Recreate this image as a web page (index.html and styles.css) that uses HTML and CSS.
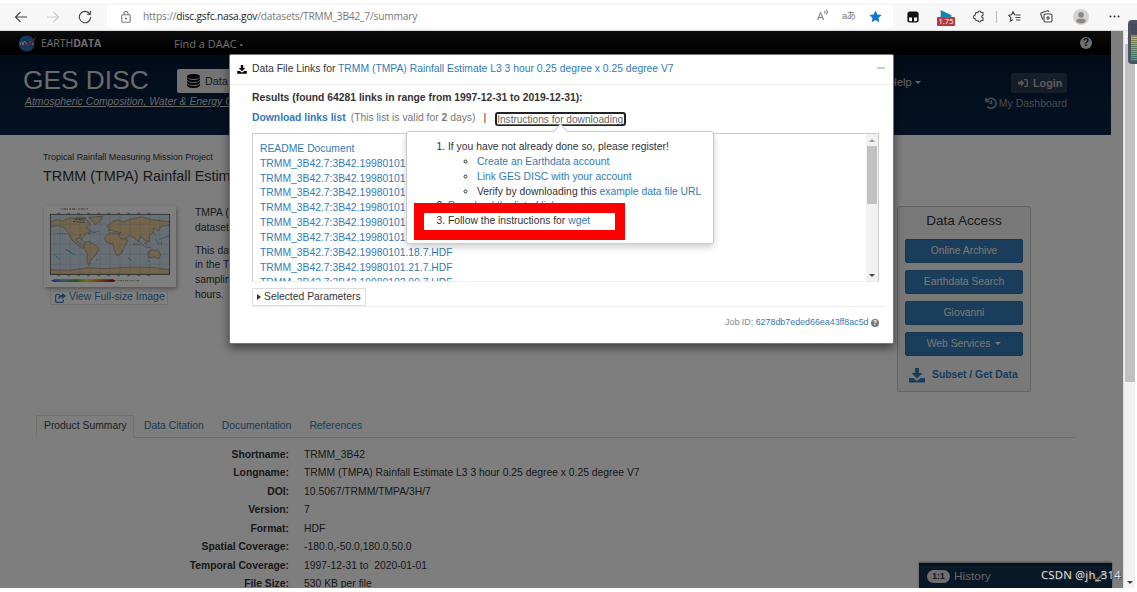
FILE: index.html
```html
<!DOCTYPE html>
<html lang="en">
<head>
  <meta charset="UTF-8"/>
  <meta name="viewport" content="width=device-width, initial-scale=1.0"/>
  <title>GES DISC Dataset: TRMM (TMPA) Rainfall Estimate</title>
  <link rel="stylesheet" href="styles.css">
</head>
<body>
  <!-- browser toolbar -->
  <div class="browser-bar">
    <div class="nav-icons">
      <svg width="14" height="14" viewBox="0 0 14 14"><path d="M13 7H1.5M6.5 2L1.5 7l5 5"/></svg>
      <svg class="disabled" width="14" height="14" viewBox="0 0 14 14"><path d="M1 7h11.5M7.5 2l5 5-5 5"/></svg>
      <svg width="14" height="14" viewBox="0 0 14 14"><path d="M11.8 4A5.7 5.7 0 1 0 12.7 7M12.4.8v3.5H8.9"/></svg>
    </div>
    <div class="address">
      <svg class="lock" width="10" height="12" viewBox="0 0 10 12"><rect x=".8" y="3.8" width="8.4" height="7.4" rx="1"/><path d="M3 3.8V2.5a2 2 0 0 1 4 0v1.3"/><circle cx="5" cy="7.5" r=".5"/></svg>
      <span class="url">https://<b>disc.gsfc.nasa.gov</b>/datasets/TRMM_3B42_7/summary</span>
      <span class="read">A<svg width="5" height="7" viewBox="0 0 5 7"><path d="M.6 2q1 1 0 2.500M2.400.7q2 2.300 0 4.800"/></svg></span>
      <span class="trans">aあ</span>
      <svg class="star" width="13" height="13" viewBox="0 0 14 14"><path d="M7 .6l2 4.200 4.600.6-3.400 3.100.9 4.700L7 10.900l-4.100 2.300.9-4.700L.4 5.400 5 4.800z"/></svg>
    </div>
    <div class="tools">
      <svg class="ext" width="12" height="12" viewBox="0 0 12 12"><rect x=".4" y=".6" width="11.200" height="10.800" rx="2.500" fill="#111"/><path d="M2 6.500h3v3.800H3.200A1.200 1.200 0 0 1 2 9zM7 6.500h3V9a1.200 1.200 0 0 1-1.200 1.300H7z" fill="#fff"/></svg>
      <span class="speed"><svg width="12" height="9" viewBox="0 0 12 9"><path d="M0 0l12 6v3H0z" fill="#1285b5"/></svg><i>1.75</i></span>
      <svg class="puzzle" width="12" height="13" viewBox="0 0 12 13"><path d="M3 2.500h2a1.500 1.500 0 0 1 3 0h2v2.700a1.300 1.300 0 0 0 0 2.600v2.700H8a1.500 1.500 0 0 1-3 0H3L1.800 8.500a1.500 1.500 0 0 1 0-3z"/></svg>
      <span class="sep"></span>
      <svg class="fav" width="13" height="12" viewBox="0 0 13 12"><path d="M7.800 4L6.500 3.800 5 .8 3.600 3.800.7 4.300l2.200 2.300-.5 3.500L5 8.700M8 4h4.500M7.500 6.500h5M8 9h4.500"/></svg>
      <svg class="coll" width="13" height="13" viewBox="0 0 13 13"><rect x="4" y="4" width="8" height="8" rx="1.500"/><path d="M8 6v4M6 8h4M2.800 9.500L.8 4.200q-.3-1 .7-1.500L7.500.8q1-.2 1.500.9"/></svg>
      <svg class="avatar" width="16" height="16" viewBox="0 0 16 16"><circle cx="8" cy="8" r="8" fill="#d5d3d1"/><circle cx="8" cy="5.800" r="2.900" fill="#8b8886"/><path d="M3.300 12.500q0-2.700 2.400-2.700h4.600q2.400 0 2.400 2.700Q11 14.500 8 14.500t-4.700-2z" fill="#8b8886"/></svg>
      <svg class="more" width="11" height="3" viewBox="0 0 11 3"><circle cx="1.500" cy="1.500" r="1"/><circle cx="5.500" cy="1.500" r="1"/><circle cx="9.500" cy="1.500" r="1"/></svg>
    </div>
  </div>

  <div class="viewport">
    <div class="page">
      <div class="nasa-bar">
        <svg class="nasa" width="20" height="17" viewBox="0 0 20 17"><circle cx="8.700" cy="8.500" r="8" fill="#2b6cb8"/><path d="M2 10q2-6 3 0 1-6 3-2t3 1q2-5 4 1" stroke="#eee" fill="none"/><path d="M1 12Q7 11 11 8T19 1Q14 10 10 10T1 12" fill="#e0334a"/></svg>
        <span class="earthdata">EARTH<b>DATA</b></span>
        <span class="daac">Find a DAAC <small>•</small></span>
        <span class="q">?</span>
      </div>
      <div class="site-header">
        <div class="brand">
          <div class="logo">GES DISC</div>
          <div class="tagline">Atmospheric Composition, Water &amp; Energy Cycles</div>
        </div>
        <div class="search-type">
          <svg width="13" height="14" viewBox="0 0 13 14"><path d="M0 2.500Q0 0 6.500 0T13 2.500 6.500 5 0 2.500M0 4q2 2 6.500 2T13 4v1.500Q12 8 6.500 8T0 5.500zM0 7q2 2 6.500 2T13 7v1.500Q12 11 6.500 11T0 8.500zM0 10q2 2 6.500 2T13 10v1.500Q12 14 6.500 14T0 11.500z"/></svg>
          Data
        </div>
        <div class="help">Help <i class="caret"></i></div>
        <div class="user">
          <div class="login"><svg width="10" height="8" viewBox="0 0 10 8"><path d="M0 2.600h3V.5L6.300 4 3 7.500V5.400H0zM6 0h2.500Q10 0 10 1.500v5Q10 8 8.500 8H6V6.700h1.900q.7 0 .7-.8V2.100Q8.600 1.300 7.900 1.300H6z"/></svg>Login</div>
          <div class="dashboard"><svg width="12" height="12" viewBox="0 0 12 12"><path d="M1 .8v3.700h3.700M1.500 4.200A5 5 0 1 1 2.300 9.500M6.500 3.200v3.300H4.500"/></svg>My Dashboard</div>
        </div>
      </div>

      <div class="dataset">
        <div class="project">Tropical Rainfall Measuring Mission Project</div>
        <h1>TRMM (TMPA) Rainfall Estimate L3</h1>
        <div class="overview">
          <div class="preview">
            <svg class="map" width="132" height="81" viewBox="18 20 396 243">
              <rect x="18" y="20" width="396" height="243" fill="#fff"/>
              <path d="M68 29h82" stroke="#999" stroke-width="4" stroke-dasharray="5 3 9 2 3 4"/>
              <rect x="37" y="45" width="358" height="180" fill="#cfdde9"/>
              <g fill="#e6c898" stroke="#71685c" stroke-width="1.500">
                <path d="M38 68l17-7 20 4 20-10 25 3 20-3 12 13 5 9-14 8 10 6 8 5-13 5-10 8-7 7 2 8-10-9-8 5 5 9 10 4 10 11-7 3-18-13-13-12-6-12-7-13-12-14-20-4-19 4z"/>
                <path d="M152 54l42-3-5 12-17 13-7-10z"/>
                <path d="M139 128l16-1 23 14 5 7-9 18-13 14-10 15-5-8 2-24-10-18z"/>
                <path d="M203 110l12-10 25 2 15 6 9 14h6l-6 12-8 14-9 17-11 4-7-18-4-16-20-7-5-9z"/>
                <path d="M210 96l5-11-9-3 13-12 20-9 16 7 25-9 30-7 30 9 55 6v11l-24 3-10 14-15-9v14l-14 10 4 12-10 9-8-12-10-8-7 18-11-13-15-7-8 6-17 5-10-15 10-5-20-4-15-4z"/>
                <path d="M330 158l13-8 9 5 6-5 10 15-5 13-12-5-19 3z"/>
                <path d="M38 211l55 2 57-8 50 3 80-5 60 1 54 7v14H38z"/>
                <path d="M308 130l12 12 20 4M318 132l10 4M349 100l3 10M255 153l-3 8" fill="none"/>
              </g>
              <path d="M110 60l30 3M105 66l35 4M115 55l28 3M150 200l8-7" stroke="#555" stroke-width="2.500" stroke-dasharray="6 2 3 2"/>
              <path d="M37 75h358M37 105h358M37 135h358M37 165h358M37 195h358M67 45v180M97 45v180M126 45v180M156 45v180M186 45v180M216 45v180M246 45v180M276 45v180M306 45v180M335 45v180M365 45v180" stroke="#8798ab" stroke-width="1" opacity=".6"/>
              <g fill="none" stroke-width="3" stroke-dasharray="4 3">
                <path d="M58 103h25M48 165l18 15M83 150l28 18M150 104l35-8M270 176l12 8M288 134l20 2M328 182l8 6M365 120l28-10" stroke="#46a680"/>
                <path d="M125 107h5M175 180l3 2M286 135h6M326 122l8 5M370 128v10M222 132l5-5" stroke="#d65b26"/>
                <path d="M86 152l18 10M168 96v8M353 120l8 14" stroke="#4c8fc9"/>
              </g>
              <rect x="37" y="45" width="358" height="180" fill="none" stroke="#555" stroke-width="2.500"/>
              <path d="M58 42h300M58 229h300" stroke="#777" stroke-width="2.500" stroke-dasharray="8 22"/>
              <defs><linearGradient id="scale"><stop stop-color="#335ccc"/><stop offset=".2" stop-color="#4fb3c6"/><stop offset=".4" stop-color="#53a238"/><stop offset=".55" stop-color="#eadb38"/><stop offset=".75" stop-color="#e66c22"/><stop offset="1" stop-color="#7c1010"/></linearGradient></defs>
              <path d="M38 244l12-4h174l10 4-10 4H50z" fill="url(#scale)"/>
              <path d="M238 244h68" stroke="#999" stroke-width="3" stroke-dasharray="3 3 9 2"/>
            </svg>
            <a class="full-size"><svg width="11" height="10" viewBox="0 0 11 10"><path d="M5 1.500H2Q.7 1.500.7 2.800V8q0 1.300 1.300 1.300h5Q8.300 9.300 8.300 8V6.500" fill="none" stroke="#337ab7" stroke-width="1.200"/><path d="M7 0l4 3-4 3V4.200Q4.500 4 3.600 6.800 2.500 2 7 1.800z" fill="#337ab7"/></svg>View Full-size Image</a>
          </div>
          <div class="description">
            <p>TMPA (3B42)<br>dataset</p>
            <p>This data<br>in the TRMM<br>sampling<br>hours.</p>
          </div>
          <div class="data-access">
            <h2>Data Access</h2>
            <a class="btn">Online Archive</a>
            <a class="btn">Earthdata Search</a>
            <a class="btn">Giovanni</a>
            <a class="btn">Web Services <i class="caret"></i></a>
            <a class="subset"><svg width="16" height="15" viewBox="0 0 16 15"><path d="M6 0h4v5h3.500L8 10.500 2.500 5H6zM0 10h4.500L8 13l3.500-3H16v4.500H0z"/></svg>Subset / Get Data</a>
          </div>
        </div>
        <div class="tabs">
          <a class="active">Product Summary</a>
          <a>Data Citation</a>
          <a>Documentation</a>
          <a>References</a>
        </div>
        <dl class="summary">
          <dt>Shortname:</dt><dd>TRMM_3B42</dd>
          <dt>Longname:</dt><dd>TRMM (TMPA) Rainfall Estimate L3 3 hour 0.25 degree x 0.25 degree V7</dd>
          <dt>DOI:</dt><dd>10.5067/TRMM/TMPA/3H/7</dd>
          <dt>Version:</dt><dd>7</dd>
          <dt>Format:</dt><dd>HDF</dd>
          <dt>Spatial Coverage:</dt><dd>-180.0,-50.0,180.0,50.0</dd>
          <dt>Temporal Coverage:</dt><dd>1997-12-31 to &nbsp;2020-01-01</dd>
          <dt>File Size:</dt><dd>530 KB per file</dd>
        </dl>
      </div>
      <div class="history">
        <span class="count">1:1</span>History
        <svg width="10" height="10" viewBox="0 0 10 10"><path d="M5.500 0H10v4.500L8.500 3 3 8.500 4.500 10H0V5.500L1.500 7 7 1.500z"/></svg>
      </div>
      <div class="backdrop"></div>
    </div>
    <div class="scrollbar"><i class="up"></i><i class="thumb"></i><i class="down"></i></div>
  </div>

  <div class="modal">
    <div class="modal-header">
      <svg width="10" height="9" viewBox="0 0 16 15"><path d="M6 0h4v5h3.500L8 10.500 2.500 5H6zM0 10h4.500L8 13l3.500-3H16v4.500H0z"/></svg>
      <span>Data File Links for <a>TRMM (TMPA) Rainfall Estimate L3 3 hour 0.25 degree x 0.25 degree V7</a></span>
      <i class="minimize"></i>
    </div>
    <div class="modal-body">
      <div class="results">Results (found 64281 links in range from 1997-12-31 to 2019-12-31):</div>
      <div class="download-line">
        <a class="download">Download links list</a>
        <span class="valid">(This list is valid for <b>2</b> days)</span>
        <span class="pipe">|</span>
        <span class="instructions">Instructions for downloading</span>
      </div>
      <div class="links-box">
        <div class="links">
          <a>README Document</a>
          <a>TRMM_3B42.7:3B42.19980101.00.7.HDF</a>
          <a>TRMM_3B42.7:3B42.19980101.03.7.HDF</a>
          <a>TRMM_3B42.7:3B42.19980101.06.7.HDF</a>
          <a>TRMM_3B42.7:3B42.19980101.09.7.HDF</a>
          <a>TRMM_3B42.7:3B42.19980101.12.7.HDF</a>
          <a>TRMM_3B42.7:3B42.19980101.15.7.HDF</a>
          <a>TRMM_3B42.7:3B42.19980101.18.7.HDF</a>
          <a>TRMM_3B42.7:3B42.19980101.21.7.HDF</a>
          <a>TRMM_3B42.7:3B42.19980102.00.7.HDF</a>
        </div>
        <div class="scrollbar small"><i class="up"></i><i class="thumb"></i><i class="down"></i></div>
      </div>
      <div class="params"><span><i></i>Selected Parameters</span></div>
      <div class="job">Job ID: <a>6278db7eded66ea43ff8ac5d</a> <span class="q">?</span></div>
    </div>
    <div class="popover">
      <ol>
        <li>If you have not already done so, please register!
          <ul>
            <li><a>Create an Earthdata account</a></li>
            <li><a>Link GES DISC with your account</a></li>
            <li>Verify by downloading this <a>example data file URL</a></li>
          </ul>
        </li>
        <li><a>Download the list of links</a></li>
        <li>Follow the instructions for <a>wget</a></li>
      </ol>
    </div>
    <div class="highlight"></div>
  </div>

  <div class="meter"></div>
  <div class="watermark">CSDN @jh_314</div>
</body>
</html>
```

FILE: styles.css
```css
* {
  box-sizing: border-box;
}
body {
  margin: 0;
  padding-top: 3px;
  width: 1137px;
  height: 592px;
  overflow: hidden;
  position: relative;
  background: #fff;
  color: #333;
  font-family: "Liberation Sans", Arial, sans-serif;
  font-size: 10.35px;
  line-height: 14.86px;
}
a {
  color: #337ab7;
}
svg {
  flex: none;
}

/* toolbar */
.browser-bar {
  height: 28px;
  background: #f7f7f7;
  display: flex;
  align-items: center;
  border-bottom: 1px solid #ddd;
}
.browser-bar svg {
  fill: none;
  stroke: #444;
  stroke-width: 1.1;
}
.nav-icons {
  display: flex;
  width: 107px;
  padding-left: 14px;
  gap: 18px;
}
.nav-icons .disabled {
  stroke: #ccc;
}
.address {
  width: 786px;
  height: 23px;
  background: #fff;
  border-radius: 4px;
  display: flex;
  align-items: center;
  padding-left: 14px;
  font-family: "Open Sans", "Noto Sans", sans-serif;
  color: #777;
}
.address .lock {
  stroke: #777;
}
.url {
  margin-left: 12px;
  width: 674px;
  font-size: 10.2px;
  letter-spacing: -0.19px;
}
.url b {
  font-weight: normal;
  color: #222;
}
.read {
  width: 25px;
  font-size: 11px;
}
.read svg {
  vertical-align: 4px;
  stroke-width: .8;
}
.trans {
  width: 27px;
  font-size: 9.5px;
  font-family: "Liberation Sans", "Noto Sans CJK JP", sans-serif;
  letter-spacing: -0.8px;
}
.browser-bar .star {
  fill: #0b78d4;
  stroke: none;
}
.tools {
  display: flex;
  align-items: center;
  padding-left: 14px;
}
.tools .ext,
.tools .avatar {
  stroke: none;
}
.speed {
  width: 18px;
  height: 17px;
  margin-left: 18px;
  padding-left: 3px;
  line-height: 0;
  margin-top: 3px;
}
.speed svg {
  stroke: none;
  display: block;
  height: 8px;
}
.speed i {
  display: block;
  margin: -1px 0 0 -3px;
  background: #b23b3f;
  color: #fff;
  font: 7.5px/9px "Open Sans", sans-serif;
  text-align: center;
  border-radius: 1px;
}
.puzzle {
  margin-left: 18px;
}
.sep {
  width: 1px;
  height: 12px;
  background: #bbb;
  margin: 0 11px;
}
.coll {
  margin-left: 19px;
}
.avatar {
  margin-left: 20px;
}
.browser-bar .more {
  margin-left: 20px;
  fill: #333;
  stroke: none;
}

/* page under the modal */
.viewport {
  display: flex;
  height: 557px;
}
.page {
  width: 1123px;
  height: 557px;
  position: relative;
  overflow: hidden;
  background: #fcfcfc;
}
.backdrop {
  position: absolute;
  inset: 0;
  background: rgba(0, 0, 0, 0.5);
}
.nasa-bar {
  width: 1111px;
  height: 24px;
  background: linear-gradient(#1a1a1a, #000 80%);
  color: #ddd;
  display: flex;
  align-items: center;
  padding-left: 18px;
  font-family: "Open Sans", "Noto Sans", sans-serif;
}
.earthdata {
  width: 133px;
  margin-left: 3px;
  font-size: 10.4px;
}
.daac {
  flex: 1;
  font-size: 11px;
  padding-top: 3px;
}
.daac small {
  font-size: 9px;
}
.q {
  display: inline-block;
  background: #ddd;
  color: #000;
  width: 12px;
  height: 12px;
  border-radius: 50%;
  font: bold 10px/12px "Liberation Sans", sans-serif;
  text-align: center;
}
.nasa-bar .q {
  margin-right: 19px;
}
.site-header {
  width: 1111px;
  height: 80px;
  background: linear-gradient(#051731, #0a2548);
  color: #ccc;
  display: flex;
}
.brand {
  width: 177px;
  padding: 11px 0 0 23px;
  white-space: nowrap;
}
.logo {
  font-size: 26.3px;
  line-height: 29px;
  color: #d5d5d5;
}
.tagline {
  padding-left: 2px;
  font-size: 10.4px;
  font-style: italic;
  text-decoration: underline;
}
.search-type {
  width: 150px;
  height: 24px;
  margin-top: 14px;
  background: #e6e6e6;
  border-radius: 2px;
  color: #333;
  display: flex;
  align-items: center;
  padding-left: 10px;
  gap: 5px;
  font-size: 10.8px;
  z-index: 0;
}
.help {
  margin: 20px 0 0 562px;
  width: 94px;
  font-size: 11px;
}
.caret {
  display: inline-block;
  border: 3px solid transparent;
  border-top-color: currentColor;
  border-bottom: 0;
  vertical-align: 2px;
}
.user {
  width: 84px;
  display: flex;
  flex-direction: column;
  align-items: flex-end;
  padding-top: 18px;
  color: #8e959e;
  white-space: nowrap;
}
.user svg {
  fill: #aaa;
}
.login {
  display: flex;
  align-items: center;
  gap: 5px;
  width: 56px;
  height: 20px;
  padding-left: 7px;
  background: #2b3b50;
  border-radius: 3px;
  color: #bbb;
  font-size: 10.8px;
  font-weight: bold;
}
.dashboard {
  display: flex;
  align-items: center;
  gap: 2px;
  margin-top: 3px;
  font-size: 10.5px;
}
.dashboard svg {
  fill: none;
  stroke: #8e959e;
  stroke-width: 1.6;
}
.dataset {
  width: 1077px;
  padding: 15px 0 0 36px;
}
.project {
  padding-left: 7px;
  font-size: 8.9px;
}
h1 {
  margin: 2px 0 0 7px;
  width: 300px;
  font-size: 14.4px;
  line-height: 18px;
  font-weight: normal;
  white-space: nowrap;
}
.overview {
  display: flex;
  height: 209px;
  margin-top: 21px;
}
.preview {
  width: 159px;
  padding: 0 0 0 8px;
}
.map {
  display: block;
  box-shadow: 1px 2px 4px rgba(0, 0, 0, 0.35);
}
.full-size {
  display: flex;
  align-items: center;
  gap: 3px;
  width: 118px;
  height: 14px;
  margin: 4px 0 0 6px;
  padding-left: 4px;
  border: 1px solid #e2e2e2;
  font-size: 10.4px;
  white-space: nowrap;
}
.description {
  width: 60px;
  white-space: nowrap;
}
.description p {
  margin: 0 0 8px;
}
.data-access {
  width: 134px;
  height: 186px;
  margin-left: 642px;
  padding: 6px 7px 0;
  background: #f3f3f3;
  border: 1px solid #c8c8c8;
  border-radius: 3px;
  flex: none;
}
h2 {
  margin: 0 0 10px;
  font-size: 13.6px;
  line-height: 16px;
  font-weight: normal;
  text-align: center;
}
.btn {
  display: block;
  height: 24px;
  line-height: 21px;
  margin-bottom: 7px;
  background: #337ab7;
  border: 1px solid #2e6da4;
  border-radius: 2px;
  color: #eee;
  text-align: center;
}
.btn .caret {
  margin-left: 2px;
}
.subset {
  display: flex;
  align-items: center;
  gap: 7px;
  padding: 5px 0 0 4px;
  font-weight: bold;
}
.subset svg {
  fill: #337ab7;
}
.tabs {
  display: flex;
  height: 23px;
  margin-right: 1px;
  border-bottom: 1px solid #ddd;
}
.tabs a {
  padding: 4px 0 0 10px;
  margin-right: 8px;
}
.tabs a.active {
  width: 98px;
  height: 23px;
  margin-right: 0;
  padding: 3px 0 0 7px;
  border: 1px solid #e5e5e5;
  border-bottom-color: #fcfcfc;
  color: #444;
  white-space: nowrap;
}
.summary {
  display: grid;
  grid-template-columns: 253px 1fr;
  column-gap: 15px;
  grid-auto-rows: 18.5px;
  align-items: center;
  margin: 8px 0 0;
}
.summary dt {
  font-weight: bold;
  text-align: right;
}
.summary dd {
  margin: 0;
}
.history {
  position: absolute;
  right: 11px;
  bottom: 0;
  width: 193px;
  height: 25px;
  background: #12304f;
  border-top: 2px solid #0b2036;
  box-shadow: 0 -1px 2px rgba(0, 0, 0, 0.4);
  color: #c8c8c8;
  display: flex;
  align-items: center;
  padding-left: 8px;
  font-size: 11.8px;
}
.count {
  width: 23px;
  height: 13px;
  margin-right: 4px;
  border-radius: 7px;
  background: #ddd;
  color: #12304f;
  font: bold 8.5px/13px "Liberation Sans", sans-serif;
  text-align: center;
}
.history svg {
  margin-left: 104px;
  fill: #ccc;
}

/* scrollbars */
.scrollbar {
  width: 12px;
  background: #f1f1f1;
  border-left: 1px solid #ddd;
  display: flex;
  flex-direction: column;
  align-items: center;
}
.scrollbar .up {
  margin: 5px 0;
  border: 3px solid transparent;
  border-top: 0;
  border-bottom-color: #999;
}
.scrollbar .thumb {
  width: 10px;
  height: 338px;
  background: #c1c1c1;
}
.scrollbar .down {
  margin: auto 0 4px;
  border: 3px solid transparent;
  border-bottom: 0;
  border-top-color: #444;
}
.scrollbar.small {
  border: 0;
}
.scrollbar.small .up {
  margin: 5px 0 4px;
}
.scrollbar.small .thumb {
  height: 58px;
}

/* modal */
.modal {
  position: absolute;
  left: 229px;
  top: 54px;
  width: 665px;
  height: 290px;
  background: #fff;
  border: 1px solid #777;
  border-radius: 2px;
  box-shadow: 0 4px 10px rgba(0, 0, 0, 0.5);
}
.modal-header {
  display: flex;
  align-items: center;
  height: 30px;
  padding: 0 8px 0 7px;
  gap: 5px;
  border-bottom: 1px solid #eee;
}
.minimize {
  width: 8px;
  height: 2px;
  margin: 0 0 3px auto;
  background: #ccc;
}
.modal-body {
  padding: 6px 7px 0 22px;
}
.results {
  font-weight: bold;
}
.download-line {
  display: flex;
  align-items: center;
  height: 16px;
  margin: 5px 0 6px;
}
.download {
  font-weight: bold;
  margin-right: 5px;
}
.valid {
  color: #777;
}
.pipe {
  margin: 0 9px 0 8px;
}
.instructions {
  width: 131px;
  border: 2px solid #222;
  border-radius: 3px;
  height: 14px;
  font-size: 10.15px;
  line-height: 11px;
  color: #666;
  text-decoration: underline;
  white-space: nowrap;
}
.links-box {
  display: flex;
  width: 627px;
  height: 149px;
  border: 1px solid #ccc;
  border-bottom-color: #eee;
  overflow: hidden;
}
.links {
  flex: 1;
  padding: 8px 7px;
}
.links a {
  display: block;
}
.params {
  height: 25px;
  padding-top: 6px;
  border-bottom: 1px solid #eee;
}
.params span {
  display: flex;
  align-items: center;
  width: 114px;
  height: 18px;
  padding: 1px 0 0 4px;
  gap: 3px;
  border: 1px solid #ddd;
}
.params i {
  border: 3px solid transparent;
  border-left: 4px solid #333;
  border-right: 0;
}
.job {
  margin: 8px 7px 0 0;
  text-align: right;
  font-size: 8.9px;
  color: #888;
}
.job .q {
  width: 8px;
  height: 8px;
  background: #777;
  color: #fff;
  font-size: 7px;
  line-height: 8px;
  vertical-align: 0;
}
.popover {
  position: absolute;
  left: 176px;
  top: 76px;
  width: 308px;
  height: 113px;
  background: #fff;
  border: 1px solid #ccc;
  border-radius: 3px;
  box-shadow: 0 3px 7px rgba(0, 0, 0, 0.2);
}
.popover::before {
  content: "";
  position: absolute;
  left: 148px;
  top: -6px;
  width: 10px;
  height: 10px;
  background: #fff;
  border: 1px solid #ccc;
  border-right: 0;
  border-bottom: 0;
  transform: rotate(45deg);
}
ol {
  margin: 8px 0 0;
  padding-left: 41px;
}
ul {
  margin: 0;
  padding-left: 29px;
}
.highlight {
  position: absolute;
  left: 184px;
  top: 148px;
  width: 211px;
  height: 37px;
  border: 10px solid #f00;
}

/* desktop level meter at the screen edge */
.meter {
  position: absolute;
  left: 1128px;
  top: 20px;
  width: 12px;
  height: 44px;
  border: 3px solid #4d5163;
  border-radius: 4px;
  background: repeating-linear-gradient(transparent 0 1px, rgba(60, 65, 80, 0.5) 1px 2px), linear-gradient(#4a4f5c 30%, #d0bd49 35%, #7db85d 65%, #35a28f);
}
.watermark {
  position: absolute;
  left: 1041px;
  top: 567px;
  font: 11.2px/16px "Noto Sans", sans-serif;
  letter-spacing: 0.25px;
  color: #ddd;
  text-shadow: 1px 1px 1px #444;
}
```
